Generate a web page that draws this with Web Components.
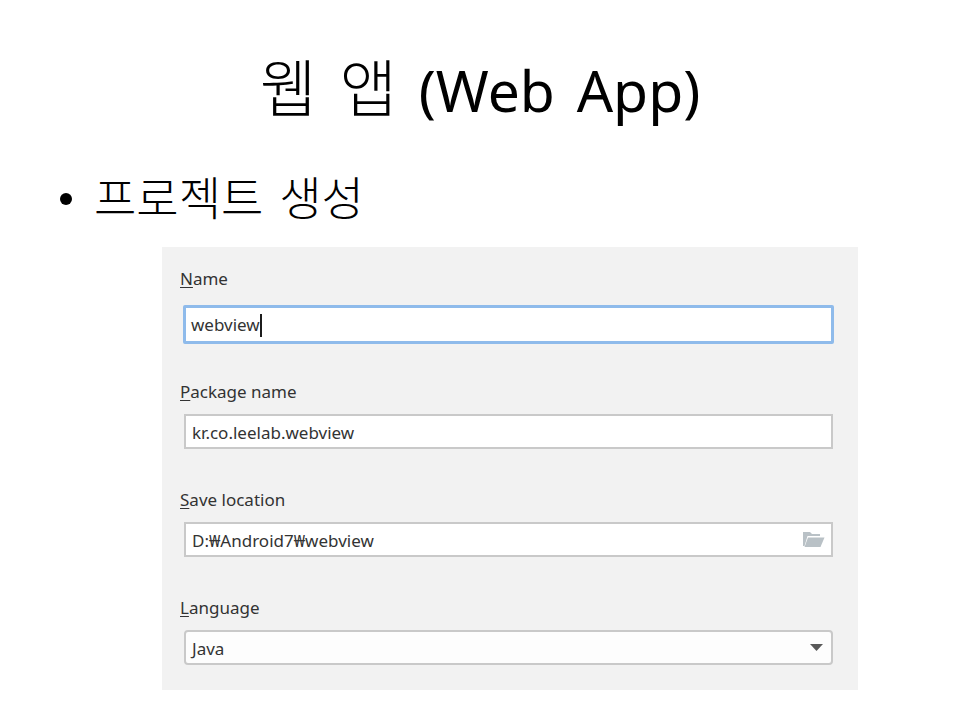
<!DOCTYPE html>
<html lang="ko">
<head>
<meta charset="utf-8">
<title>웹 앱 (Web App)</title>
<style>
  html, body { margin: 0; background: #fff; }
  body { width: 960px; height: 720px; overflow: hidden; font-family: "Noto Sans", "Noto Sans CJK KR", sans-serif; color: #000; }
  .ko { font-size: 62px; font-weight: 300; }
</style>
</head>
<body>
<slide-page>
  <slide-title><span class="ko">웹 앱</span> (Web App)</slide-title>
  <slide-bullet>프로젝트 생성</slide-bullet>
  <form-panel>
    <form-field label="Name" value="webview" focused></form-field>
    <form-field label="Package name" value="kr.co.leelab.webview"></form-field>
    <form-field label="Save location" value="D:₩Android7₩webview" kind="folder"></form-field>
    <form-field label="Language" value="Java" kind="select"></form-field>
  </form-panel>
</slide-page>

<script>
class SlidePage extends HTMLElement {
  constructor() {
    super();
    this.attachShadow({ mode: "open" });
    this.shadowRoot.innerHTML = `
      <style>
        :host { display: flex; flex-direction: column; width: 960px; height: 720px; }
      </style>
      <slot></slot>
    `;
  }
}

class SlideTitle extends HTMLElement {
  constructor() {
    super();
    this.attachShadow({ mode: "open" });
    this.shadowRoot.innerHTML = `
      <style>
        :host {
          display: block;
          text-align: center;
          font-size: 57px;
          line-height: 74px;
          padding-top: 51px;
          height: 76px;
          word-spacing: 7px;
          white-space: nowrap;
        }
      </style>
      <slot></slot>
    `;
  }
}

class SlideBullet extends HTMLElement {
  constructor() {
    super();
    this.attachShadow({ mode: "open" });
    this.shadowRoot.innerHTML = `
      <style>
        :host {
          display: flex;
          align-items: center;
          gap: 22px;
          margin-top: 43px;
          padding-left: 60px;
          height: 54px;
          font-size: 46px;
          font-weight: 300;
          line-height: 54px;
          word-spacing: 4px;
        }
        .dot { width: 12px; height: 12px; border-radius: 50%; background: #000; margin-top: 4px; }
      </style>
      <span class="dot"></span>
      <span><slot></slot></span>
    `;
  }
}

class FormPanel extends HTMLElement {
  constructor() {
    super();
    this.attachShadow({ mode: "open" });
    this.shadowRoot.innerHTML = `
      <style>
        :host {
          display: flex;
          flex-direction: column;
          gap: 40px;
          box-sizing: border-box;
          align-self: flex-start;
          width: 696px;
          height: 443px;
          margin: 23px 0 0 162px;
          padding: 21px 25px 0 22px;
          background: #f2f2f2;
        }
      </style>
      <slot></slot>
    `;
  }
}

class FormField extends HTMLElement {
  constructor() {
    super();
    this.attachShadow({ mode: "open" });
  }

  static get observedAttributes() {
    return ["label", "value", "kind", "focused"];
  }

  connectedCallback() {
    this.render();
  }

  attributeChangedCallback() {
    this.render();
  }

  render() {
    const label = this.getAttribute("label") ?? "";
    const value = this.getAttribute("value") ?? "";
    const kind = this.getAttribute("kind") ?? "text";
    const focused = this.hasAttribute("focused");

    let extra = "";
    if (kind === "folder") {
      extra = `<svg class="ico" width="23" height="17" viewBox="0 0 23 17">
        <path fill="#b9c1c6" d="M1 1h7l2 2h8v2H5.500L2.500 15H1z"/>
        <path fill="#b9c1c6" d="M6 6.500h16.500L18.500 16H2.500z"/>
      </svg>`;
    } else if (kind === "select") {
      extra = `<svg class="ico" width="13" height="7" viewBox="0 0 13 7">
        <path fill="#595959" d="M0 0h13L6.500 7z"/>
      </svg>`;
    }

    this.shadowRoot.innerHTML = `
      <style>
        :host {
          display: block;
          font-family: "Noto Sans", "Noto Sans CJK KR", sans-serif;
          font-size: 17px;
          color: #333;
        }
        .label { display: block; height: 21px; line-height: 21px; margin-left: -4px; }
        .label u { text-underline-offset: 2px; text-decoration-thickness: 1px; }
        .box {
          display: flex;
          align-items: center;
          box-sizing: border-box;
          height: 35px;
          margin-top: 12px;
          padding: 2px 6px 0;
          background: #fff;
          border: 2px solid #c9c9c9;
        }
        .box.select { border-radius: 4px; background: #fdfdfd; padding-right: 8px; }
        .box.focused {
          height: 39px;
          margin: 16px -1px -3px;
          padding: 2px 6px 0 5px;
          border: 3px solid #8fbbeb;
          border-radius: 2px;
        }
        .value { flex: 1; white-space: nowrap; line-height: 21px; }
        .caret { display: inline-block; width: 2px; height: 23px; background: #1c1c1c; vertical-align: -6px; }
        .ico { flex: none; margin-top: -2px; }
      </style>
      <span class="label"><u>${label[0]}</u>${label.slice(1)}</span>
      <div class="box ${kind} ${focused ? "focused" : ""}">
        <span class="value">${value}${focused ? '<span class="caret"></span>' : ""}</span>
        ${extra}
      </div>
    `;
  }
}

customElements.define("slide-page", SlidePage);
customElements.define("slide-title", SlideTitle);
customElements.define("slide-bullet", SlideBullet);
customElements.define("form-panel", FormPanel);
customElements.define("form-field", FormField);
</script>
</body>
</html>
